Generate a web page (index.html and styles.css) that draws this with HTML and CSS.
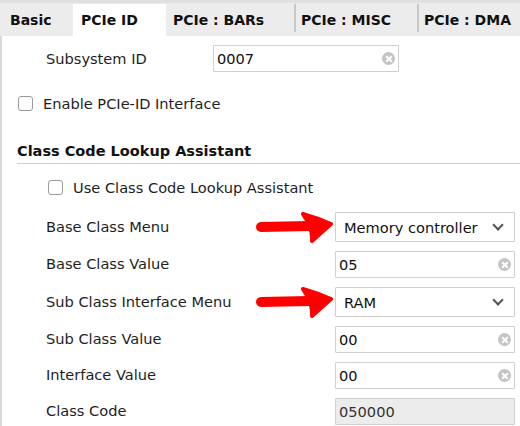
FILE: index.html
```html
<!DOCTYPE html>
<html>
<head>
<meta charset="utf-8">
<link rel="stylesheet" href="styles.css">
</head>
<body>
<div class="page">
  <div class="tabs">
    <div class="tab t-basic">Basic</div>
    <div class="tab t-id active">PCIe ID</div>
    <div class="tab t-bars">PCIe : BARs</div>
    <div class="tab t-misc">PCIe : MISC</div>
    <div class="tab t-dma">PCIe : DMA</div>
  </div>
  <div class="panel">
    <div class="row-sub">
      <span class="lbl lbl-sub">Subsystem ID</span>
      <div class="field f-sub"><span class="val">0007</span><span class="clear"></span></div>
    </div>
    <div class="check c-enable"><span class="box"></span><span>Enable PCIe-ID Interface</span></div>
    <div class="section">Class Code Lookup Assistant</div>
    <div class="check c-use"><span class="box"></span><span>Use Class Code Lookup Assistant</span></div>
    <div class="form">
      <span class="lbl">Base Class Menu</span>
      <div class="field select"><span class="val">Memory controller</span><span class="chev"></span></div>
      <span class="lbl">Base Class Value</span>
      <div class="field"><span class="val">05</span><span class="clear"></span></div>
      <span class="lbl">Sub Class Interface Menu</span>
      <div class="field select"><span class="val">RAM</span><span class="chev"></span></div>
      <span class="lbl">Sub Class Value</span>
      <div class="field"><span class="val">00</span><span class="clear"></span></div>
      <span class="lbl">Interface Value</span>
      <div class="field"><span class="val">00</span><span class="clear"></span></div>
      <span class="lbl">Class Code</span>
      <div class="field disabled"><span class="val">050000</span></div>
    </div>
  </div>
  <svg class="arrow a1" viewBox="0 0 80 34" width="80" height="34">
    <path d="M6,17 L54,16" stroke="#f00" stroke-width="10" stroke-linecap="round" fill="none"/>
    <path d="M48,4 Q62,8 76,14 Q67,22 57,31 Q58,18 48,4 Z" fill="#f00" stroke="#f00" stroke-width="4" stroke-linejoin="round"/>
  </svg>
  <svg class="arrow a2" viewBox="0 0 80 34" width="80" height="34">
    <path d="M6,17 L54,16" stroke="#f00" stroke-width="10" stroke-linecap="round" fill="none"/>
    <path d="M48,4 Q62,8 76,14 Q67,22 57,31 Q58,18 48,4 Z" fill="#f00" stroke="#f00" stroke-width="4" stroke-linejoin="round"/>
  </svg>
</div>
</body>
</html>
```
FILE: styles.css
```css
* { box-sizing: border-box; }
html, body { margin: 0; padding: 0; background: #fff; }
body {
  font-family: "DejaVu Sans", sans-serif;
  font-size: 14.6px;
  color: #1e1e1e;
  width: 520px;
  height: 426px;
  overflow: hidden;
}
.page { position: relative; width: 520px; height: 426px; }

.tabs {
  display: flex;
  height: 36px;
  background: #ececec;
  border-top: 3px solid #e0e0e0;
  padding-top: 1px;
}
.tab {
  display: flex;
  align-items: center;
  font-weight: bold;
  font-size: 14px;
  color: #111;
  padding-left: 8px;
  padding-bottom: 1px;
  position: relative;
}
.tab + .tab::before {
  content: "";
  position: absolute;
  left: 0;
  top: 0;
  bottom: 4px;
  width: 2px;
  background: #c8c8c8;
}
.tab.active::before, .active + .tab::before { display: none; }
.t-basic { width: 73px; padding-left: 10px; }
.t-id { width: 93px; }
.t-bars { width: 128px; padding-left: 7px; }
.t-misc { width: 123px; padding-left: 7px; }
.t-dma { width: 103px; padding-left: 7px; }
.tab.active { background: #fff; }

.panel {
  border-left: 2px solid #dadada;
  height: 390px;
  padding-top: 9px;
}
.row-sub {
  display: flex;
  align-items: center;
  padding-left: 44px;
}
.lbl-sub { width: 167px; }

.field {
  position: relative;
  display: flex;
  align-items: center;
  height: 27px;
  border: 1px solid #cfcfcf;
  border-radius: 1px;
  background: #fff;
  padding-left: 3px;
  color: #111;
}
.f-sub { width: 186px; }
.val { flex: 1; }
.clear {
  width: 13px;
  height: 13px;
  border-radius: 50%;
  background: #c4c4c4;
  margin-right: 3px;
  position: relative;
}
.clear::before, .clear::after {
  content: "";
  position: absolute;
  left: 2.5px;
  top: 5.5px;
  width: 8px;
  height: 2px;
  background: #fff;
  transform: rotate(45deg);
}
.clear::after { transform: rotate(-45deg); }

.check {
  display: flex;
  align-items: center;
  gap: 10px;
  height: 16px;
}
.box {
  width: 15px;
  height: 15px;
  border: 1px solid #9a9a9a;
  border-radius: 3px;
  background: #fff;
}
.c-enable { margin-top: 23px; padding-left: 16px; }
.section {
  margin: 32px 0 0 15px;
  font-weight: bold;
  font-size: 14.5px;
  padding-bottom: 3px;
  border-bottom: 1px solid #cfcfcf;
  line-height: 17px;
  color: #111;
}
.c-use { margin-top: 15px; padding-left: 46px; }

.form {
  display: grid;
  grid-template-columns: 289px 180px;
  row-gap: 9px;
  margin-top: 17px;
  padding-left: 44px;
  align-items: center;
}
.form .lbl { padding-bottom: 2px; }
.form .field { padding-left: 3px; }
.field.select { height: 30px; padding-left: 8px; }
.chev {
  width: 8px;
  height: 8px;
  border-right: 2px solid #555;
  border-bottom: 2px solid #555;
  transform: rotate(45deg);
  margin-right: 12px;
  margin-top: -4px;
}
.field.disabled { background: #ececec; color: #333; }

.arrow {
  position: absolute;
  left: 255px;
  filter: blur(0.4px);
}
.a1 { top: 210px; }
.a2 { top: 285px; }
```
